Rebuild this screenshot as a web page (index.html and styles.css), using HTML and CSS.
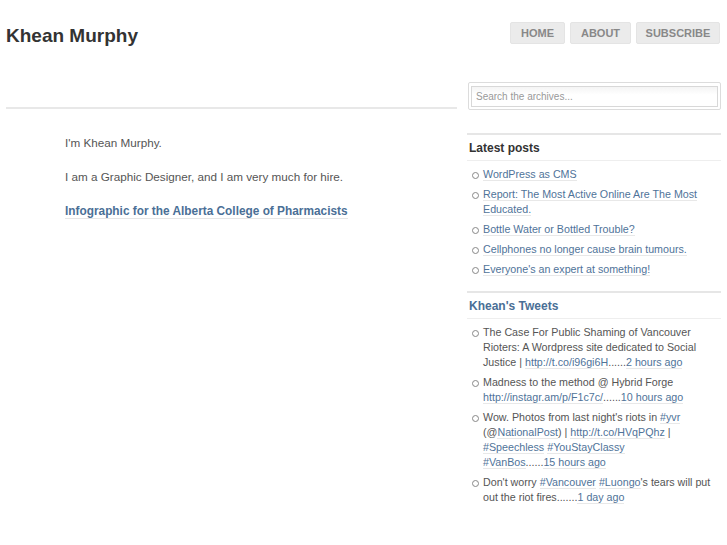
FILE: index.html
```html
<!DOCTYPE html>
<html>
<head>
<meta charset="utf-8">
<link rel="stylesheet" href="styles.css">
</head>
<body>
<div class="page">
  <header class="header">
    <h1 class="site-title">Khean Murphy</h1>
    <nav class="nav">
      <a class="nav-btn nav-home" href="#">Home</a>
      <a class="nav-btn nav-about" href="#">About</a>
      <a class="nav-btn nav-sub" href="#">Subscribe</a>
    </nav>
  </header>
  <div class="content">
    <main class="main">
      <div class="entry">
        <p>I'm Khean Murphy.</p>
        <p>I am a Graphic Designer, and I am very much for hire.</p>
        <p><a class="entry-link" href="#">Infographic for the Alberta College of Pharmacists</a></p>
      </div>
    </main>
    <aside class="sidebar">
      <div class="search">
        <input class="search-input" type="text" placeholder="Search the archives...">
      </div>
      <section class="widget">
        <h3 class="widget-title">Latest posts</h3>
        <ul class="widget-list">
          <li><a href="#">WordPress as CMS</a></li>
          <li><a href="#">Report: The Most Active Online Are The Most Educated.</a></li>
          <li><a href="#">Bottle Water or Bottled Trouble?</a></li>
          <li><a href="#">Cellphones no longer cause brain tumours.</a></li>
          <li><a href="#">Everyone's an expert at something!</a></li>
        </ul>
      </section>
      <section class="widget">
        <h3 class="widget-title blue">Khean's Tweets</h3>
        <ul class="widget-list">
          <li>The Case For Public Shaming of Vancouver Rioters: A Wordpress site dedicated to Social Justice | <span class="nw"><a href="#">http://t.co/i96gi6H</a>......<a href="#">2 hours ago</a></span></li>
          <li>Madness to the method @ Hybrid Forge <span class="nw"><a href="#">http://instagr.am/p/F1c7c/</a>......<a href="#">10 hours ago</a></span></li>
          <li>Wow. Photos from last night's riots in <a href="#">#yvr</a> (@<a href="#">NationalPost</a>) | <a href="#">http://t.co/HVqPQhz</a> | <a href="#">#Speechless</a> <a href="#">#YouStayClassy</a> <span class="nw"><a href="#">#VanBos</a>......<a href="#">15 hours ago</a></span></li>
          <li>Don't worry <a href="#">#Vancouver</a> <a href="#">#Luongo</a>'s tears will put out the riot <span class="nw">fires.......<a href="#">1 day ago</a></span></li>
        </ul>
      </section>
    </aside>
  </div>
</div>
</body>
</html>
```
FILE: styles.css
```css
* { box-sizing: border-box; }
html, body { margin: 0; padding: 0; background: #fff; }
body {
  font-family: "Liberation Sans", Arial, sans-serif;
  color: #555;
}
.page {
  padding: 0 7px 0 6px;
}
.header {
  display: flex;
  justify-content: space-between;
  align-items: flex-start;
  height: 82px;
}
.site-title {
  margin: 25px 0 0 0;
  font-size: 19px;
  line-height: 22px;
  font-weight: bold;
  color: #333;
}
.nav {
  display: flex;
  gap: 5px;
  margin-top: 22px;
}
.nav-btn {
  display: block;
  height: 22px;
  line-height: 20px;
  padding: 0;
  text-align: center;
  background: #ebebeb;
  border: 1px solid #e4e4e4;
  border-radius: 2px;
  color: #888;
  font-size: 11px;
  font-weight: bold;
  text-transform: uppercase;
  text-decoration: none;
}
.nav-home { width: 55px; }
.nav-about { width: 61px; }
.nav-sub { width: 84px; }
.content {
  display: flex;
  gap: 10px;
}
.main {
  width: 451px;
  flex: none;
  padding-top: 25px;
}
.entry {
  border-top: 2px solid #e8e8e8;
  padding: 25px 0 0 59px;
  font-size: 11.7px;
  line-height: 18px;
}
.entry p {
  margin: 0 0 16px 0;
}
.entry-link {
  color: #4a6f96;
  font-weight: bold;
  font-size: 11.85px;
  text-decoration: none;
  border-bottom: 1px solid #e6e6e6;
}
.sidebar {
  width: 254px;
  flex: none;
}
.search {
  border: 1px solid #dcdcdc;
  border-radius: 2px;
  padding: 3px 2px 2px 2px;
  height: 28px;
  margin-left: 1px;
}
.search-input {
  display: block;
  width: 100%;
  height: 21px;
  margin: 0;
  border: 1px solid #d8d8d8;
  background: linear-gradient(#f4f4f4, #fff 40%);
  font-family: "Liberation Sans", Arial, sans-serif;
  font-size: 10px;
  padding: 0 4px;
  color: #555;
  outline: none;
}
.search-input::placeholder { color: #999; }
.widget {
  margin-top: 23px;
  border-top: 2px solid #e6e6e6;
}
.widget + .widget { margin-top: 6px; }
.widget-title {
  margin: 0;
  padding: 6px 2px 4px 2px;
  font-size: 12px;
  line-height: 15px;
  font-weight: bold;
  color: #333;
  border-bottom: 1px solid #eee;
}
.widget-title.blue { color: #4a6f96; }
.widget-list {
  list-style: none;
  margin: 0;
  padding: 6px 0 3px 16px;
  font-size: 10.7px;
  line-height: 15px;
  color: #555;
}
.widget-list li {
  position: relative;
  margin-bottom: 5px;
}
.widget-list li::before {
  content: "";
  position: absolute;
  left: -11px;
  top: 5px;
  width: 5px;
  height: 5px;
  border: 1px solid #888;
  border-radius: 50%;
}
.widget-list a {
  color: #4f7399;
  text-decoration: none;
  border-bottom: 1px solid #e8e8e8;
}
.nw { white-space: nowrap; }
```
